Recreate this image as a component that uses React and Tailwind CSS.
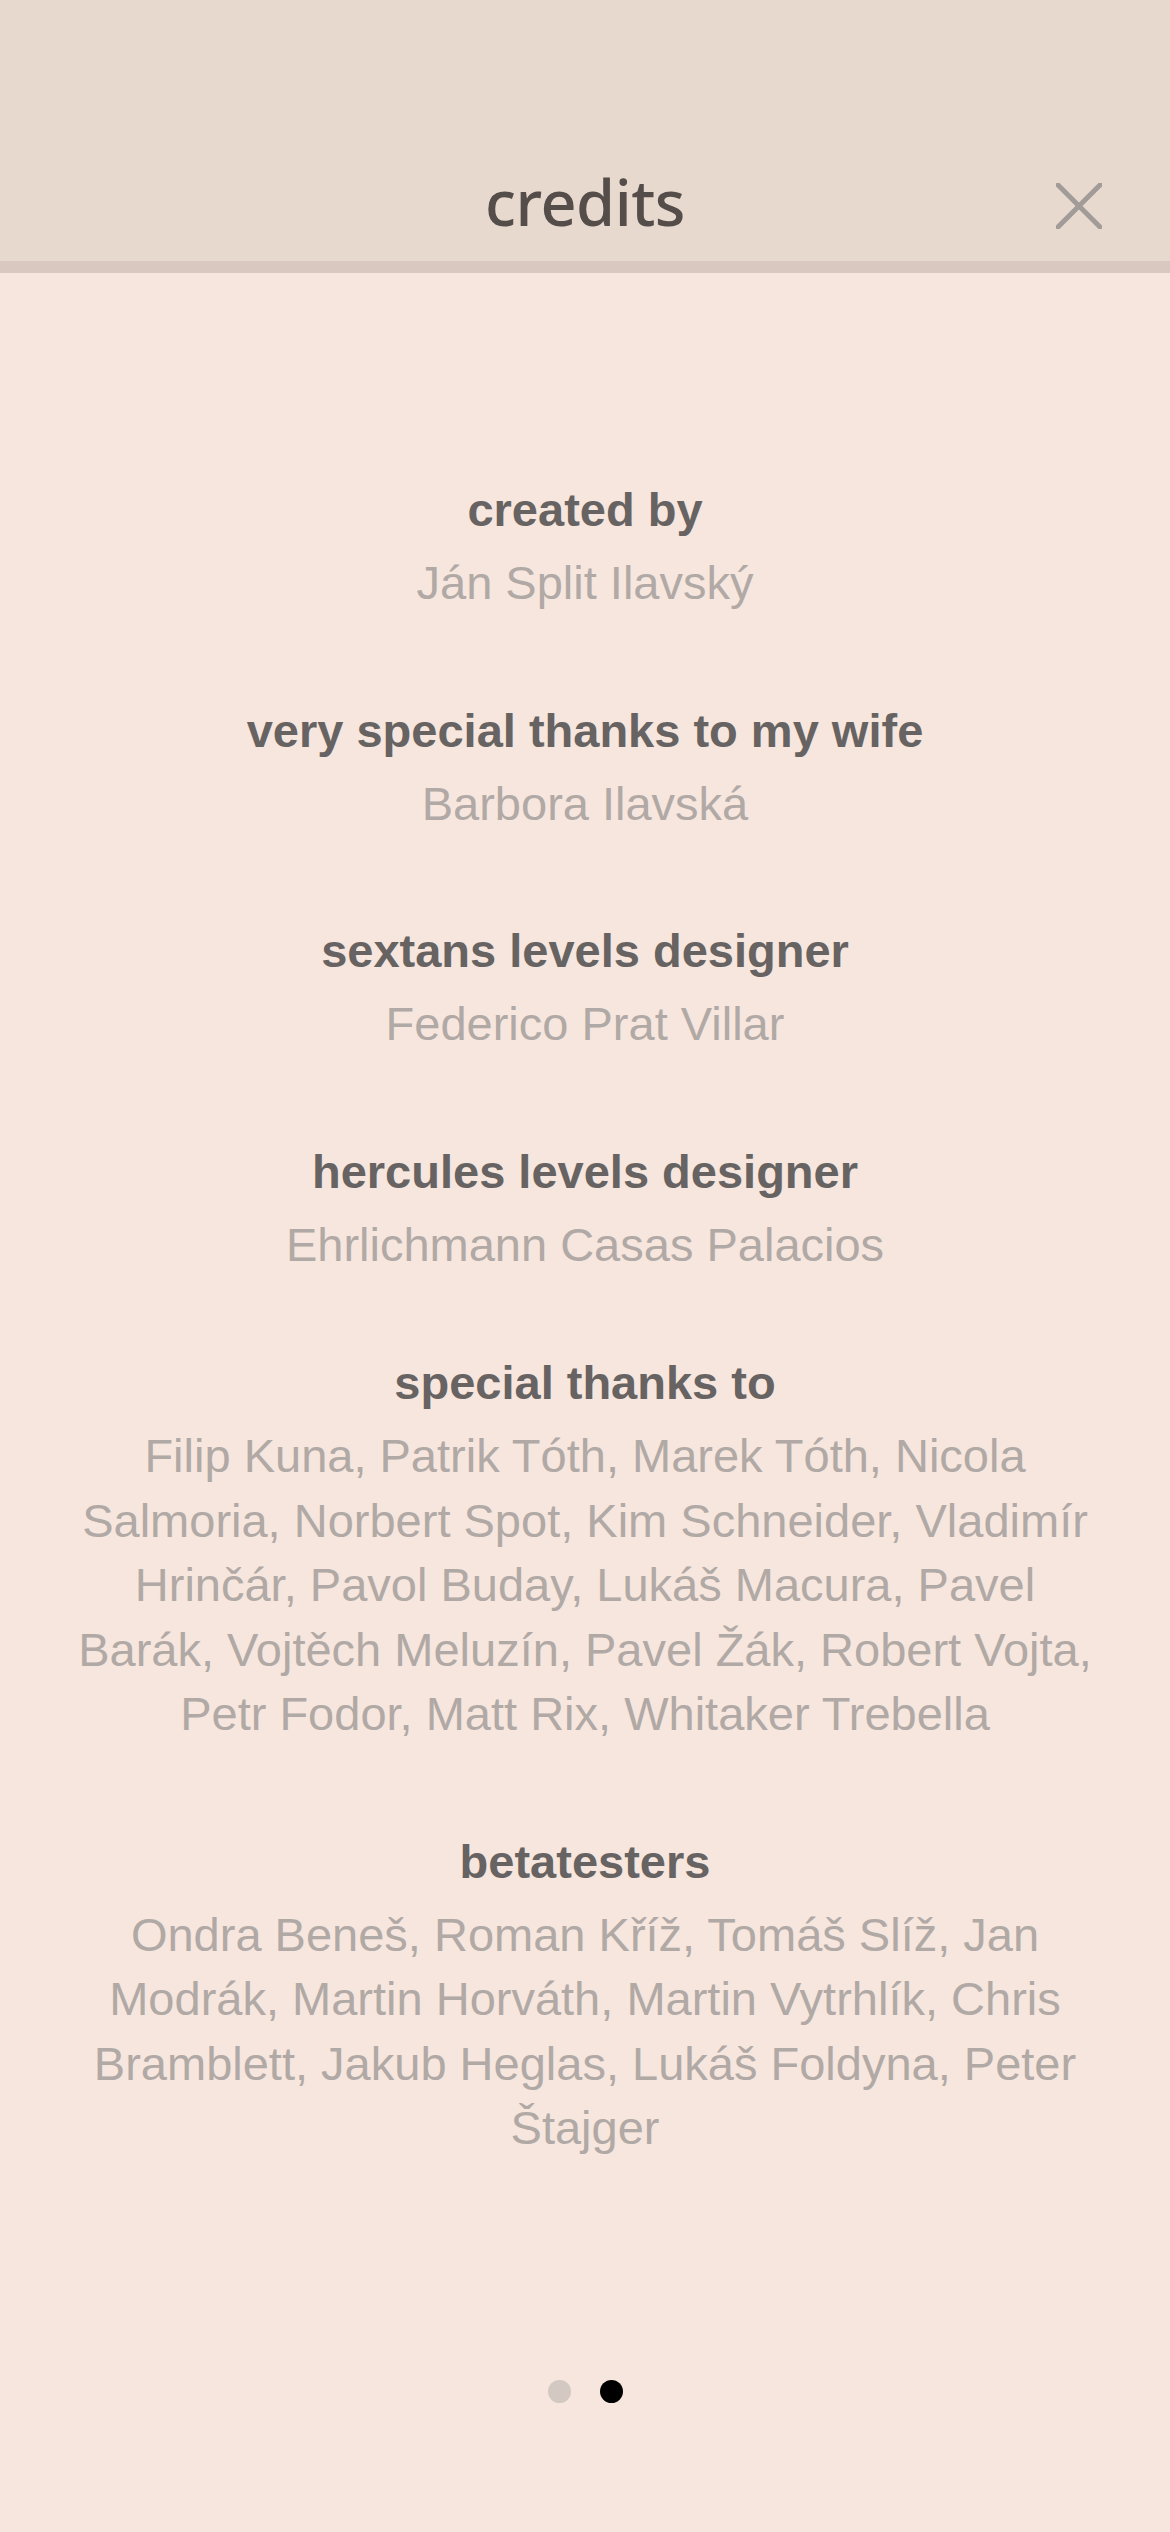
import React from "react";

const sections = [
  { title: "created by", lines: ["Ján Split Ilavský"] },
  { title: "very special thanks to my wife", lines: ["Barbora Ilavská"] },
  { title: "sextans levels designer", lines: ["Federico Prat Villar"] },
  { title: "hercules levels designer", lines: ["Ehrlichmann Casas Palacios"] },
  {
    title: "special thanks to",
    tight: true,
    lines: [
      "Filip Kuna, Patrik Tóth, Marek Tóth, Nicola",
      "Salmoria, Norbert Spot, Kim Schneider, Vladimír",
      "Hrinčár, Pavol Buday, Lukáš Macura, Pavel",
      "Barák, Vojtěch Meluzín, Pavel Žák, Robert Vojta,",
      "Petr Fodor, Matt Rix, Whitaker Trebella",
    ],
  },
  {
    title: "betatesters",
    lines: [
      "Ondra Beneš, Roman Kříž, Tomáš Slíž, Jan",
      "Modrák, Martin Horváth, Martin Vytrhlík, Chris",
      "Bramblett, Jakub Heglas, Lukáš Foldyna, Peter",
      "Štajger",
    ],
  },
];

const Section = ({ title, lines, tight }) => {
  return (
    <div className={"flex flex-col items-center text-center " + (tight ? "-mt-[9px]" : "")}>
      <h2 className="text-[47px] leading-[56px] font-bold text-[#676362]">{title}</h2>
      <p className="mt-[13px] text-[47px] leading-[64.5px] text-[#b1a9a5]">
        {lines.map((line, i) => (
          <span key={i} className="block whitespace-nowrap">
            {line}
          </span>
        ))}
      </p>
    </div>
  );
};

const App = () => {
  return (
    <div
      className="min-h-[2532px] w-full bg-[#f6e6dd] flex flex-col"
      style={{ fontFamily: '"Liberation Sans", Arial, sans-serif' }}
    >
      {/* header */}
      <div className="bg-[#e8d9cf] border-b-[12px] border-[#d8c8bf]">
        <div className="h-[261px] grid grid-cols-[1fr_auto_1fr] items-start pt-[170px]">
          <div />
          <h1
            className="text-[63px] leading-none font-medium text-[#544d4a] tracking-[-0.5px]"
            style={{ fontFamily: '"Noto Sans", sans-serif' }}
          >
            credits
          </h1>
          <div className="flex justify-end pr-[68px] pt-[13px]">
            <button className="w-[46px] h-[46px] text-[#a29c98]">
              <svg viewBox="0 0 46 46" className="w-full h-full" fill="none" stroke="currentColor" strokeWidth="5" strokeLinecap="round">
                <path d="M2 2L44 44" />
                <path d="M44 2L2 44" />
              </svg>
            </button>
          </div>
        </div>
      </div>

      {/* credits list */}
      <div className="flex flex-col gap-[87px] px-[60px] pt-[209px]">
        {sections.map((s) => (
          <Section key={s.title} title={s.title} lines={s.lines} tight={s.tight} />
        ))}
      </div>

      {/* pager */}
      <div className="flex justify-center gap-[29px] mt-[219px]">
        <span className="w-[23px] h-[23px] rounded-full bg-[#d3c8c2]" />
        <span className="w-[23px] h-[23px] rounded-full bg-black" />
      </div>
    </div>
  );
};

export default App;
